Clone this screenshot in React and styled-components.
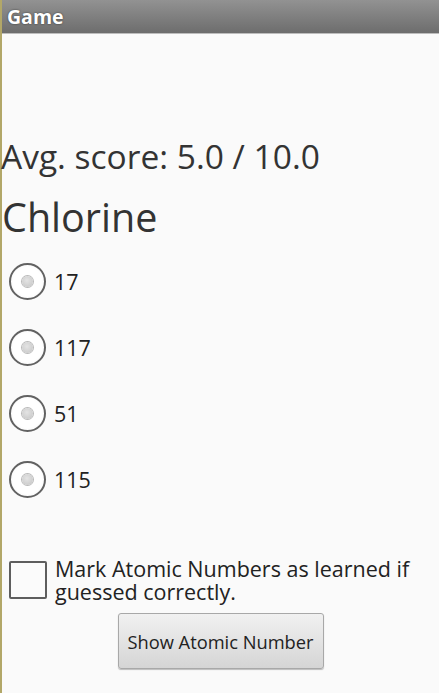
import styled, { createGlobalStyle } from 'styled-components'

const GlobalStyle = createGlobalStyle`
    html, body {
        margin: 0;
        padding: 0;
        background: #fafafa;
    }
    body {
        font-family: "Open Sans", "DejaVu Sans", sans-serif;
        color: #333333;
    }
`

const Screen = styled.div`
    min-height: 693px;
    border-left: 2px solid #b2a768;
    background: #fafafa;
    box-sizing: border-box;
`

const TitleBar = styled.div`
    height: 34px;
    background: linear-gradient(#929292, #6d6d6d);
    border-bottom: 1px solid #bdbdbd;
    box-sizing: border-box;
    display: flex;
    align-items: center;
    padding-left: 5px;
    color: #ffffff;
    font-weight: bold;
    font-size: 19.5px;
    text-shadow: 0 0 2px rgba(0, 0, 0, 0.6);
`

const Content = styled.div`
    padding-top: 99px;
`

const Score = styled.div`
    font-size: 33.5px;
    line-height: 46px;
    margin-left: -1px;
    color: #333;
`

const Element = styled.div`
    font-size: 39.5px;
    line-height: 54px;
    margin-top: 11px;
    color: #333;
`

const Choices = styled.div`
    display: flex;
    flex-direction: column;
    margin-top: 4px;
`

const Choice = styled.label`
    height: 66px;
    display: flex;
    align-items: center;
    gap: 8px;
    padding-left: 7px;
    font-size: 21.5px;
    color: #222;
`

const Radio = styled.span`
    width: 37px;
    height: 37px;
    border-radius: 50%;
    border: 2px solid #626262;
    box-sizing: border-box;
    background: radial-gradient(circle, #ffffff 60%, #f0f0f0);
    display: flex;
    align-items: center;
    justify-content: center;
    &::after {
        content: '';
        width: 11px;
        height: 11px;
        border-radius: 50%;
        background: radial-gradient(circle at 45% 40%, #e4e4e4, #c4c4c4);
        box-shadow: 0 0 0 1px #b9b9b9;
    }
`

const LearnRow = styled.label`
    display: flex;
    align-items: center;
    gap: 8px;
    margin-top: 45px;
    padding-left: 7px;
`

const Box = styled.span`
    flex: none;
    width: 38px;
    height: 38px;
    border: 2px solid #5e5e5e;
    border-radius: 2px;
    box-sizing: border-box;
    background: #fbfbfb;
`

const LearnText = styled.span`
    font-size: 21.5px;
    line-height: 23px;
    color: #222;
`

const ShowButton = styled.button`
    display: block;
    margin: 10px auto 0;
    width: 206px;
    height: 56px;
    font-family: "Open Sans", "DejaVu Sans", sans-serif;
    font-size: 18.3px;
    color: #222;
    background: linear-gradient(#f1f1f1, #d5d5d5);
    border: 1px solid #a8a8a8;
    border-radius: 3px;
    box-shadow: 0 1px 1px rgba(0, 0, 0, 0.25);
    padding: 0;
    cursor: pointer;
`

const answers = ['17', '117', '51', '115']

function App() {
    return (
        <Screen>
            <GlobalStyle />
            <TitleBar>Game</TitleBar>
            <Content>
                <Score>Avg. score: 5.0 / 10.0</Score>
                <Element>Chlorine</Element>
                <Choices>
                    {answers.map((a) => (
                        <Choice key={a}>
                            <Radio />
                            {a}
                        </Choice>
                    ))}
                </Choices>
                <LearnRow>
                    <Box />
                    <LearnText>Mark Atomic Numbers as learned if guessed correctly.</LearnText>
                </LearnRow>
                <ShowButton>Show Atomic Number</ShowButton>
            </Content>
        </Screen>
    )
}

export default App
